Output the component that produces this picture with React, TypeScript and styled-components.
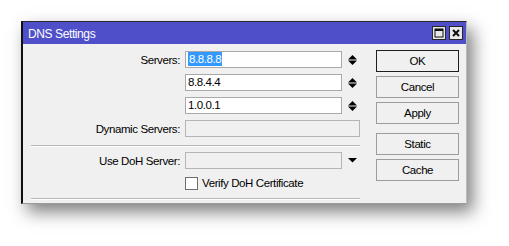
import React from 'react';
import styled, { createGlobalStyle } from 'styled-components';

const GlobalStyle = createGlobalStyle`
  html, body { margin: 0; padding: 0; background: #ffffff; }
  body { font-family: "Liberation Sans", Arial, sans-serif; font-size: 11.5px; letter-spacing: -0.4px; color: #000; }
`;

const Page = styled.div`
  width: 509px;
  height: 246px;
  box-sizing: border-box;
  padding: 21px 0 0 21px;
  overflow: hidden;
`;

const Window = styled.div`
  width: 446px;
  box-sizing: border-box;
  background: #f0f0f0;
  border-top: 1px solid #2a2a2a;
  border-left: 2px solid #111111;
  border-right: 1px solid #bdbdbd;
  border-bottom: 1px solid #9a9a9a;
  box-shadow: 6px 8px 16px rgba(0, 0, 0, 0.5);
`;

const TitleBar = styled.div`
  height: 22px;
  background: #4f50c9;
  display: flex;
  align-items: center;
  padding: 0 3px 0 5px;
`;

const Title = styled.div`
  flex: 1;
  color: #ffffff;
  font-size: 12px;
  line-height: 22px;
  padding-top: 1px;
`;

const TitleButton = styled.div`
  width: 14px;
  height: 14px;
  box-sizing: border-box;
  border: 1px solid #262626;
  background: #e9e9e9;
  display: flex;
  align-items: center;
  justify-content: center;
  margin-left: 3px;
`;

const Body = styled.div`
  display: flex;
  align-items: flex-start;
`;

const Form = styled.div`
  width: 339px;
  padding: 7px 0 3px 0;
  display: flex;
  flex-direction: column;
`;

const Row = styled.div<{ $mt?: number }>`
  display: grid;
  grid-template-columns: 157px 157px 17px;
  column-gap: 5px;
  align-items: center;
  height: 17px;
  margin-top: ${(p) => (p.$mt ?? 6)}px;
`;

const Label = styled.div`
  text-align: right;
  white-space: nowrap;
`;

const Field = styled.div<{ $disabled?: boolean; $wide?: boolean }>`
  height: 17px;
  box-sizing: border-box;
  border: 1px solid ${(p) => (p.$disabled ? '#b5b5b5' : '#a9a9a9')};
  background: ${(p) => (p.$disabled ? '#f0f0f0' : '#ffffff')};
  padding: 0 2px;
  line-height: 15px;
  white-space: nowrap;
  ${(p) => (p.$wide ? 'grid-column: 2 / 4; margin-right: 4px;' : '')}
`;

const Selected = styled.span`
  background: #3399ff;
  color: #ffffff;
  padding: 1px 1px 1px 1px;
`;

const IconCell = styled.div`
  display: flex;
  align-items: center;
  padding-left: 1px;
`;

const Separator = styled.div<{ $mt: number }>`
  margin: ${(p) => p.$mt}px 0 0 8px;
  width: 329px;
  border-top: 1px solid #b8b8b8;
  border-bottom: 1px solid #ffffff;
`;

const CheckRow = styled.div`
  display: flex;
  align-items: center;
  margin: 7px 0 0 162px;
  height: 14px;
`;

const Box = styled.div`
  width: 13px;
  height: 13px;
  box-sizing: border-box;
  border: 1px solid #6f6f6f;
  background: #ffffff;
  margin-right: 4px;
`;

const Buttons = styled.div`
  margin-left: 14px;
  padding-top: 6px;
  display: flex;
  flex-direction: column;
  width: 83px;
`;

const Button = styled.div<{ $default?: boolean; $gap?: number }>`
  height: 22px;
  box-sizing: border-box;
  border: 1px solid ${(p) => (p.$default ? '#1e1e1e' : '#9c9c9c')};
  background: #f0f0f0;
  display: flex;
  align-items: center;
  justify-content: center;
  margin-top: ${(p) => p.$gap ?? 4}px;
`;

const Spin = () => (
  <svg width="9" height="10" viewBox="0 0 9 10">
    <polygon points="0,4.5 4.5,0 9,4.5" fill="#000" />
    <polygon points="0,5.5 9,5.5 4.5,10" fill="#000" />
  </svg>
);

const DropArrow = () => (
  <svg width="9" height="5" viewBox="0 0 9 5">
    <polygon points="0,0 9,0 4.5,4.5" fill="#000" />
  </svg>
);

const MaxIcon = () => (
  <svg width="10" height="10" viewBox="0 0 10 10">
    <rect x="1" y="1" width="8" height="8" fill="none" stroke="#111" strokeWidth="1" />
    <rect x="1" y="1" width="8" height="2" fill="#111" />
  </svg>
);

const CloseIcon = () => (
  <svg width="10" height="10" viewBox="0 0 10 10">
    <path d="M2 2 L8 8 M8 2 L2 8" stroke="#111" strokeWidth="2" />
  </svg>
);

export default function App() {
  return (
    <Page>
      <GlobalStyle />
      <Window>
        <TitleBar>
          <Title>DNS Settings</Title>
          <TitleButton><MaxIcon /></TitleButton>
          <TitleButton><CloseIcon /></TitleButton>
        </TitleBar>
        <Body>
          <Form>
            <Row $mt={0}>
              <Label>Servers:</Label>
              <Field><Selected>8.8.8.8</Selected></Field>
              <IconCell><Spin /></IconCell>
            </Row>
            <Row>
              <Label />
              <Field>8.8.4.4</Field>
              <IconCell><Spin /></IconCell>
            </Row>
            <Row>
              <Label />
              <Field>1.0.0.1</Field>
              <IconCell><Spin /></IconCell>
            </Row>
            <Row>
              <Label>Dynamic Servers:</Label>
              <Field $disabled $wide />
            </Row>
            <Separator $mt={8} />
            <Row $mt={5}>
              <Label>Use DoH Server:</Label>
              <Field $disabled />
              <IconCell><DropArrow /></IconCell>
            </Row>
            <CheckRow>
              <Box />
              <span>Verify DoH Certificate</span>
            </CheckRow>
            <Separator $mt={8} />
          </Form>
          <Buttons>
            <Button $default $gap={0}>OK</Button>
            <Button $gap={4}>Cancel</Button>
            <Button $gap={4}>Apply</Button>
            <Button $gap={9}>Static</Button>
            <Button $gap={4}>Cache</Button>
          </Buttons>
        </Body>
      </Window>
    </Page>
  );
}
